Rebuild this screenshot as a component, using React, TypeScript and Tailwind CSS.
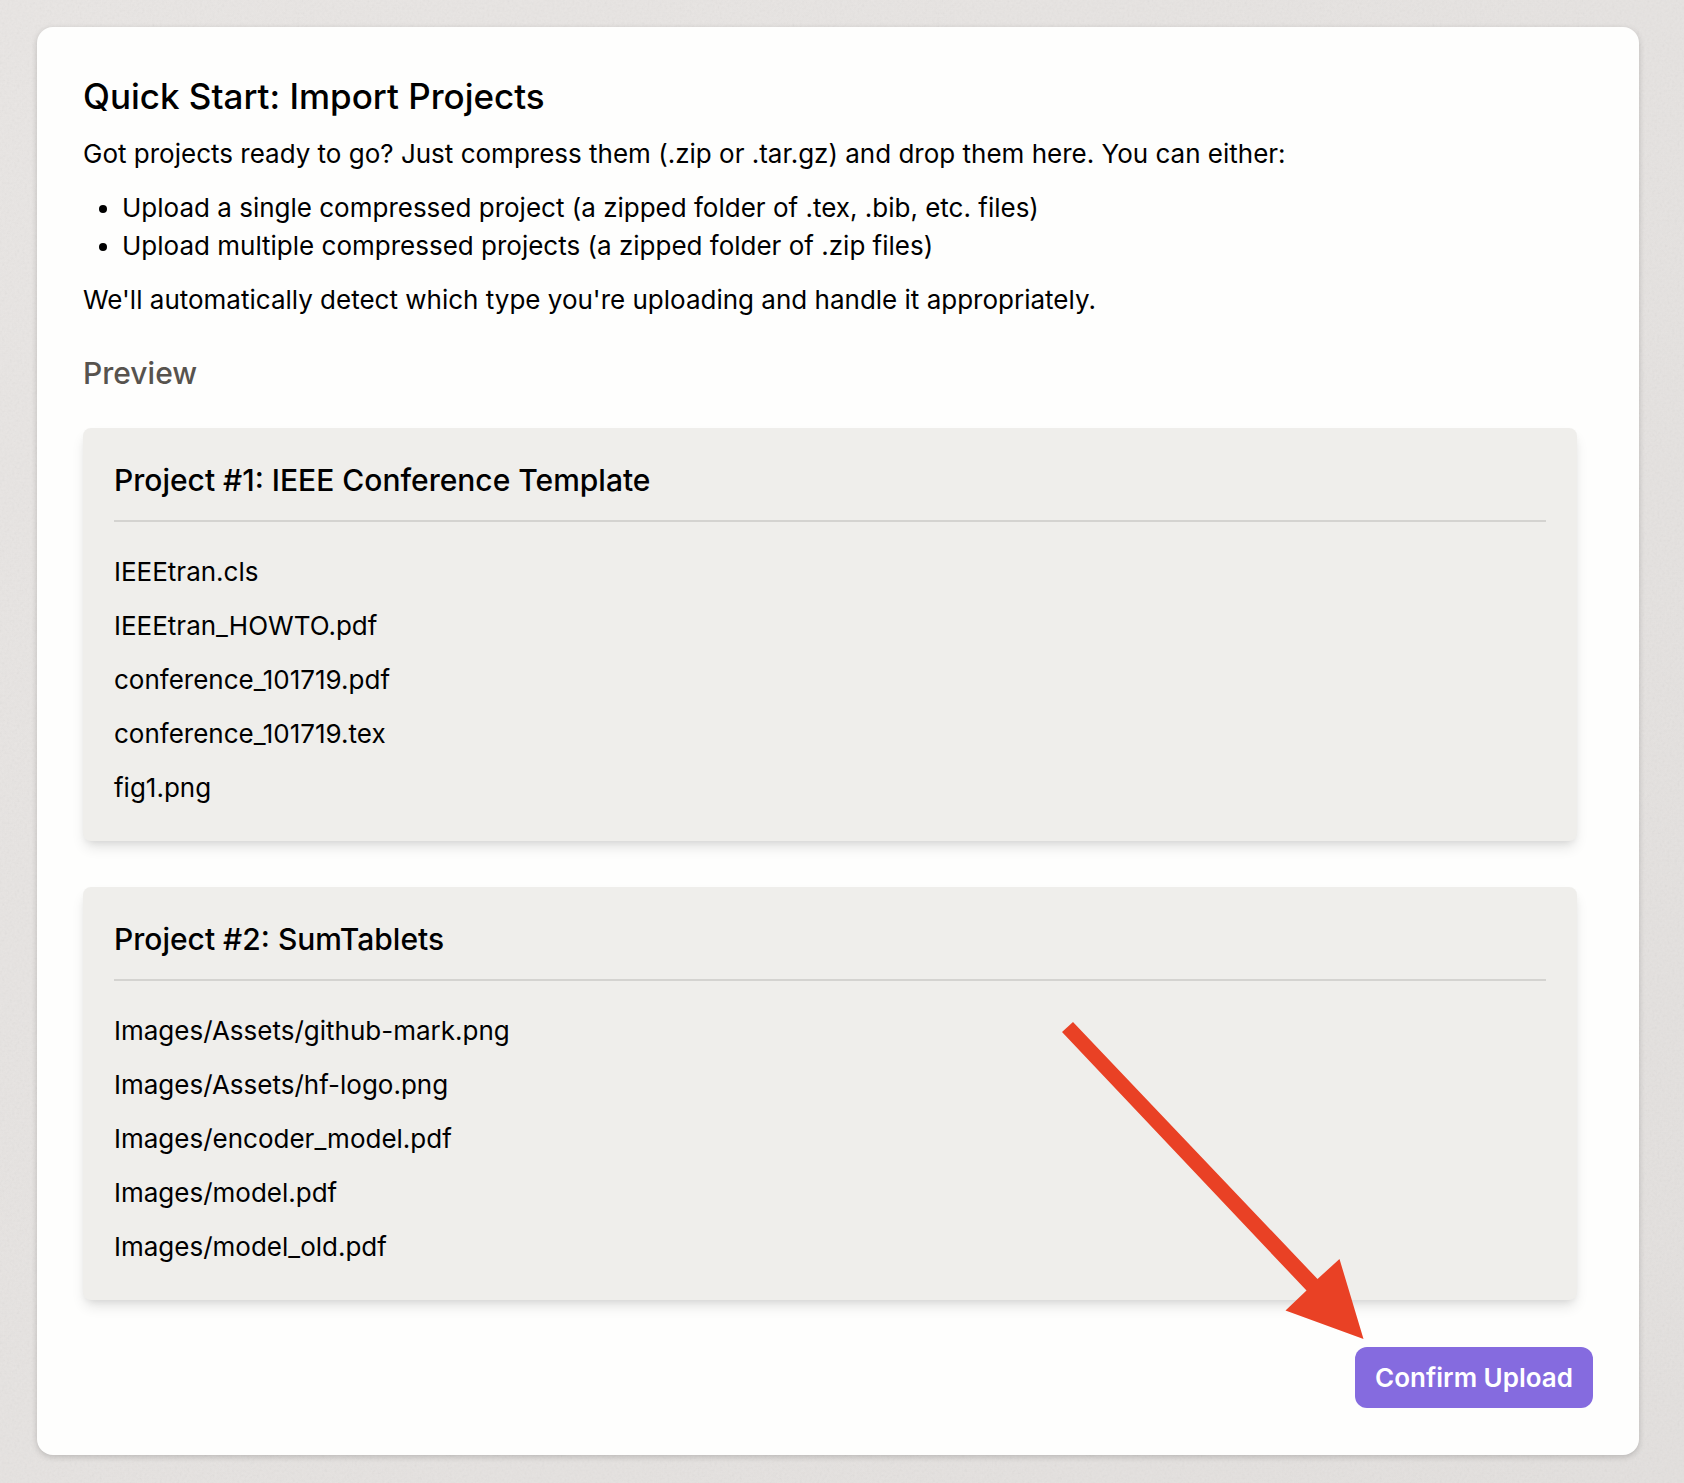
type Project = { name: string; files: string[] };

const projects: Project[] = [
  {
    name: "IEEE Conference Template",
    files: [
      "IEEEtran.cls",
      "IEEEtran_HOWTO.pdf",
      "conference_101719.pdf",
      "conference_101719.tex",
      "fig1.png",
    ],
  },
  {
    name: "SumTablets",
    files: [
      "Images/Assets/github-mark.png",
      "Images/Assets/hf-logo.png",
      "Images/encoder_model.pdf",
      "Images/model.pdf",
      "Images/model_old.pdf",
    ],
  },
];

function ProjectCard({ index, project }: { index: number; project: Project }) {
  return (
    <section className="rounded-lg bg-[#efeeeb] px-[31px] pt-[31px] pb-[34px] shadow-[0_8px_14px_-2px_rgba(0,0,0,0.11),0_4px_8px_-4px_rgba(0,0,0,0.11)]">
      <h3 className="border-b-2 border-[#d4d3d0] pb-[19px] text-[30px] leading-[42px] font-medium">
        Project #{index}: {project.name}
      </h3>
      <ul className="mt-[31px] flex flex-col gap-4">
        {project.files.map((file) => (
          <li key={file}>{file}</li>
        ))}
      </ul>
    </section>
  );
}

function Arrow() {
  return (
    <svg
      className="pointer-events-none absolute right-[229px] bottom-full mb-2 h-[318px] w-[303px]"
      viewBox="0 0 303 318"
      fill="#e94125"
      aria-hidden="true"
    >
      <path d="M12 1 L256.500 258 L278.500 238 L302.500 318 L224.500 289.500 L245.500 269.500 L1 11 Z" />
    </svg>
  );
}

function Grain() {
  return (
    <svg className="pointer-events-none absolute inset-0 h-full w-full opacity-10" aria-hidden="true">
      <filter id="grain">
        <feTurbulence type="fractalNoise" baseFrequency="0.4" numOctaves="2" />
        <feColorMatrix type="saturate" values="0" />
      </filter>
      <rect width="100%" height="100%" filter="url(#grain)" />
    </svg>
  );
}

export default function App() {
  return (
    <div className="relative min-h-screen bg-linear-to-br from-[#e9e6e4] to-[#e3e0de] pt-[27px] pr-[45px] pb-7 pl-[37px] font-['Inter',sans-serif] text-[26px] leading-[38px] text-black">
      <Grain />
      <main className="relative rounded-2xl bg-[#fefefd] px-[46px] pt-[46px] pb-[47px] shadow-[0_2px_6px_rgba(0,0,0,0.18)]">
        <h1 className="text-[35px] leading-[46px] font-medium">Quick Start: Import Projects</h1>
        <p className="mt-4">
          Got projects ready to go? Just compress them (.zip or .tar.gz) and drop them here. You can either:
        </p>
        <ul className="mt-4 list-disc pl-[39px]">
          <li>Upload a single compressed project (a zipped folder of .tex, .bib, etc. files)</li>
          <li>Upload multiple compressed projects (a zipped folder of .zip files)</li>
        </ul>
        <p className="mt-4">
          We'll automatically detect which type you're uploading and handle it appropriately.
        </p>
        <h2 className="mt-[34px] text-[30px] leading-10 font-medium text-[#57534e]">Preview</h2>
        <div className="mt-[35px] flex flex-col gap-[46px] pr-4">
          {projects.map((project, i) => (
            <ProjectCard key={project.name} index={i + 1} project={project} />
          ))}
        </div>
        <div className="relative mt-[47px] flex justify-end">
          <button
            type="button"
            className="h-[61px] rounded-xl bg-[#856bdf] px-5 font-semibold text-white"
          >
            Confirm Upload
          </button>
          <Arrow />
        </div>
      </main>
    </div>
  );
}
